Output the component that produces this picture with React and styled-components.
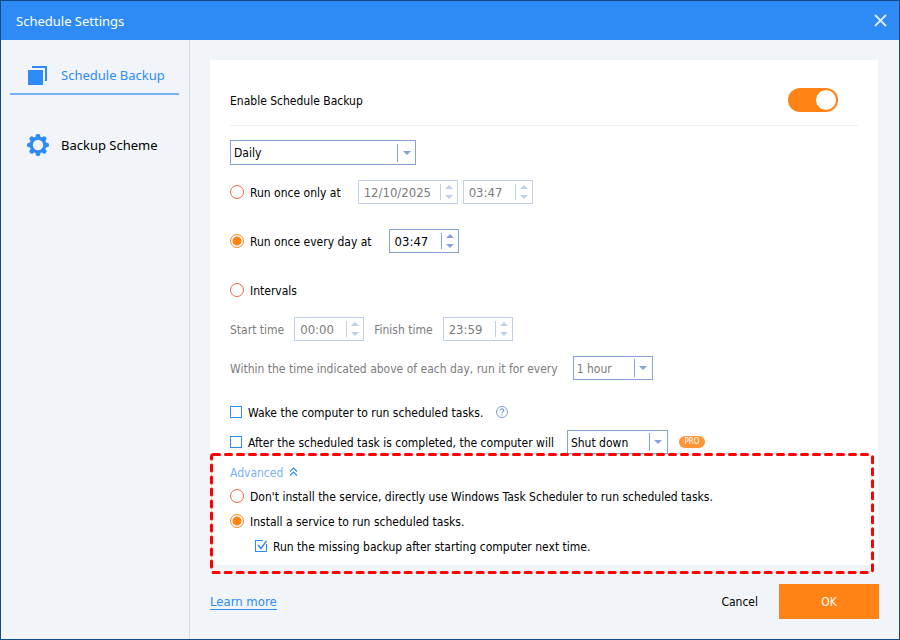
import React, { useState } from 'react';
import styled, { createGlobalStyle } from 'styled-components';

const GlobalStyle = createGlobalStyle`
  *, *::before, *::after {
    box-sizing: border-box;
  }

  body {
    margin: 0;
  }

  body, button, input, select {
    font-family: 'DejaVu Sans Condensed', 'Noto Sans', sans-serif;
    font-size: 12px;
    color: #000;
  }
`;

const Window = styled.div`
  min-height: 100vh;
  display: flex;
  flex-direction: column;
  background: #f1f5fa;
  border: 1px solid #0f4a86;
`;

const TitleBar = styled.header`
  height: 39px;
  flex: none;
  display: flex;
  align-items: center;
  justify-content: space-between;
  padding: 0 12px 0 15px;
  background: #2e8bf6;
`;

const Title = styled.h1`
  margin: 0;
  font-family: 'Noto Sans', sans-serif;
  font-size: 13px;
  font-weight: 400;
  color: #fff;
`;

const CloseButton = styled.button`
  display: flex;
  padding: 0;
  border: 0;
  background: none;
  cursor: pointer;
`;

const Body = styled.div`
  flex: 1;
  display: flex;
`;

const Sidebar = styled.nav`
  width: 189px;
  flex: none;
  display: flex;
  flex-direction: column;
  gap: 30px;
  padding: 15px 10px 0 9px;
  border-right: 1px solid #d8dce2;
`;

const NavItem = styled.a`
  height: 40px;
  display: flex;
  align-items: center;
  gap: 11px;
  padding: 2px 0 0 16px;
  font-family: 'Noto Sans', sans-serif;
  font-size: 13px;
  white-space: nowrap;
  text-decoration: none;
  color: ${({ $active }) => ($active ? '#2e8bf6' : '#000')};
  border-bottom: 2px solid ${({ $active }) => ($active ? '#79b1f8' : 'transparent')};
`;

const Main = styled.main`
  flex: 1;
  display: flex;
  flex-direction: column;
  padding: 20px;
`;

const Card = styled.section`
  margin-right: 1px;
  padding: 0 20px 7px;
  background: #fff;
`;

const EnableRow = styled.div`
  display: flex;
  align-items: center;
  justify-content: space-between;
  padding: 28px 20px 13px 0;
  margin-bottom: 14px;
  border-bottom: 1px solid #f0f1f3;
`;

const Toggle = styled.input`
  appearance: none;
  width: 50px;
  height: 24px;
  margin: 0;
  padding: 2px;
  display: flex;
  justify-content: ${({ checked }) => (checked ? 'flex-end' : 'flex-start')};
  border-radius: 12px;
  background: ${({ checked }) => (checked ? '#ff8316' : '#c4c9d1')};
  cursor: pointer;

  &::before {
    content: '';
    width: 20px;
    height: 20px;
    border-radius: 50%;
    background: #fff;
  }
`;

const Row = styled.div`
  min-height: 24px;
  display: flex;
  align-items: center;
  margin-top: ${({ $top = 0 }) => $top}px;
`;

const Option = styled.label`
  display: flex;
  align-items: center;
  gap: 6px;
  white-space: nowrap;
`;

const Text = styled.span`
  padding-top: 2px;
`;

const Radio = styled.input.attrs({ type: 'radio' })`
  appearance: none;
  width: 14px;
  height: 14px;
  margin: 0;
  border: 1px solid #f0673c;
  border-radius: 50%;
  background: #fff;

  &:checked {
    border-color: #ff8316;
    background: radial-gradient(circle, #ff8316 4px, #fff 5px);
  }
`;

const CheckInput = styled.input.attrs({ type: 'checkbox' })`
  appearance: none;
  width: 12px;
  height: 12px;
  margin: 0;
  grid-area: 1 / 1;
  border: 1px solid #2e8bf6;
  background: #fff;
`;

const CheckBox = styled.span`
  display: grid;

  svg {
    grid-area: 1 / 1;
    z-index: 1;
    pointer-events: none;
  }
`;

const FieldLabel = styled.label`
  margin-right: ${({ $right = 10 }) => $right}px;
  padding-top: 2px;
  white-space: nowrap;
  color: #7c7c7c;
`;

const Field = styled.div`
  width: ${({ $width }) => $width}px;
  height: 24px;
  flex: none;
  display: flex;
  align-items: center;
  margin-left: ${({ $left = 0 }) => $left}px;
  margin-right: ${({ $right = 0 }) => $right}px;
  border: 1px solid ${({ $disabled }) => ($disabled ? '#c0d0e9' : '#86a3d3')};
  color: ${({ $disabled }) => ($disabled ? '#c0d0e9' : '#86a3d3')};
  background: #fff;
`;

const FieldInput = styled.input`
  flex: 1;
  min-width: 0;
  height: 22px;
  padding: 1px 0 0 5px;
  border: 0;
  outline: 0;
  background: none;
  font-size: 13px;

  &:disabled {
    color: #7c7c7c;
  }
`;

const Spinner = styled.div`
  width: 17px;
  height: 16px;
  display: flex;
  flex-direction: column;
  align-items: center;
  justify-content: space-between;
  padding: 1px 0;
  border-left: 1px solid currentColor;
`;

const Step = styled.button`
  display: flex;
  padding: 0;
  border: 0;
  background: none;
  color: inherit;
`;

const SelectBox = styled.div`
  width: ${({ $width }) => $width}px;
  height: ${({ $height = 24 }) => $height}px;
  flex: none;
  display: grid;
  align-items: center;
  margin-left: ${({ $left = 0 }) => $left}px;
  border: 1px solid #86a3d3;
  color: #86a3d3;
  background: #fff;
`;

const NativeSelect = styled.select`
  appearance: none;
  grid-area: 1 / 1;
  width: 100%;
  height: 22px;
  padding: 1px 18px 0 3px;
  border: 0;
  outline: 0;
  background: none;
  color: ${({ $muted }) => ($muted ? '#7c7c7c' : '#000')};
`;

const SelectArrow = styled.span`
  grid-area: 1 / 1;
  justify-self: end;
  width: 18px;
  height: 18px;
  display: flex;
  align-items: center;
  justify-content: center;
  border-left: 1px solid currentColor;
  pointer-events: none;
`;

const HelpButton = styled.button`
  display: flex;
  margin-left: 13px;
  padding: 0;
  border: 0;
  background: none;
`;

const ProBadge = styled.span`
  width: 26px;
  height: 12px;
  margin-left: 11px;
  border-radius: 6px;
  background: #ff9536;
  color: #fff;
  font-size: 8px;
  line-height: 12px;
  text-align: center;
`;

const Advanced = styled.div`
  position: relative;
  display: flex;
  flex-direction: column;
  align-items: flex-start;
  gap: 1px;
  padding-top: 6px;
`;

const AdvancedToggle = styled.button`
  height: 23px;
  display: flex;
  align-items: center;
  gap: 6px;
  padding: 0;
  border: 0;
  background: none;
  color: #79b1f8;
`;

const AdvancedRow = styled.div`
  height: 24px;
  display: flex;
  align-items: center;
  padding-left: ${({ $indent }) => ($indent ? 25 : 0)}px;
`;

const Highlight = styled.svg`
  position: absolute;
  top: -1px;
  left: -20px;
  width: calc(100% + 36px);
  height: 121px;
  pointer-events: none;
`;

const Footer = styled.footer`
  display: flex;
  align-items: center;
  margin-top: 19px;
`;

const LearnMore = styled.a`
  margin-right: auto;
  border-bottom: 1px solid #2e8bf6;
  font-size: 13px;
  line-height: 15px;
  text-decoration: none;
  color: #2e8bf6;
`;

const CancelButton = styled.button`
  height: 35px;
  padding: 0 21px;
  border: 0;
  background: none;
`;

const OkButton = styled.button`
  width: 100px;
  height: 35px;
  border: 0;
  background: #ff8316;
  color: #fff;
`;

const CloseIcon = () => (
  <svg width="13" height="13" viewBox="0 0 13 13" stroke="#dcebfd" strokeWidth="1.8">
    <path d="M1 1l11 11M12 1l-11 11" />
  </svg>
);

const StackIcon = () => (
  <svg width="24" height="24" viewBox="0 0 24 24" fill="#2e8bf6">
    <path d="M2 7h15v15H2z" />
    <path d="M6 3h15v15h-2V5H6z" />
  </svg>
);

const GearIcon = () => (
  <svg width="24" height="24" viewBox="0 0 24 24">
    <g fill="#2e8bf6">
      {[0, 45, 90, 135].map((angle) => (
        <rect key={angle} x="9.7" y="1" width="4.6" height="22" rx="1.8" transform={`rotate(${angle} 12 12)`} />
      ))}
      <circle cx="12" cy="12" r="8.4" />
    </g>
    <circle cx="12" cy="12" r="5.2" fill="#f1f5fa" />
  </svg>
);

const UpTriangle = () => (
  <svg width="8" height="4" viewBox="0 0 8 4" fill="currentColor">
    <path d="M0 4L4 0 8 4z" />
  </svg>
);

const DownTriangle = () => (
  <svg width="8" height="4" viewBox="0 0 8 4" fill="currentColor">
    <path d="M0 0h8L4 4z" />
  </svg>
);

const HelpIcon = () => (
  <svg width="12" height="12" viewBox="0 0 12 12" fill="none" stroke="#7fa0c8">
    <circle cx="6" cy="6" r="5.5" />
    <path d="M4.2 4.6c0-2.3 3.6-2.2 3.6 0C7.8 5.8 6 5.8 6 7.3" strokeWidth="1.2" />
    <path d="M6 8.3v1.2" strokeWidth="1.2" />
  </svg>
);

const DoubleChevron = () => (
  <svg width="9" height="9" viewBox="0 0 9 9" fill="none" stroke="#2e8bf6" strokeWidth="1.2">
    <path d="M1 4.5L4.5 1 8 4.5M1 8.5L4.5 5 8 8.5" />
  </svg>
);

const Check = ({ label, ...props }) => (
  <Option>
    <CheckBox>
      <CheckInput {...props} />
      {props.checked && (
        <svg width="12" height="12" viewBox="0 0 12 12" fill="none">
          <path d="M11.5 0v4M8 .5h4" stroke="#fff" />
          <path d="M3 5l3 3.5L11.5 1" stroke="#2e8bf6" strokeWidth="1.5" />
        </svg>
      )}
    </CheckBox>
    <Text>{label}</Text>
  </Option>
);

const RadioOption = ({ label, ...props }) => (
  <Option>
    <Radio {...props} />
    <Text>{label}</Text>
  </Option>
);

const SpinField = ({ id, label, value, disabled, ...box }) => (
  <Field $disabled={disabled} {...box}>
    <FieldInput id={id} aria-label={label} defaultValue={value} disabled={disabled} />
    <Spinner>
      <Step aria-label="Increase" disabled={disabled}><UpTriangle /></Step>
      <Step aria-label="Decrease" disabled={disabled}><DownTriangle /></Step>
    </Spinner>
  </Field>
);

const Select = ({ id, label, options, $muted, ...box }) => (
  <SelectBox {...box}>
    <NativeSelect id={id} aria-label={label} $muted={$muted}>
      {options.map((option) => (
        <option key={option}>{option}</option>
      ))}
    </NativeSelect>
    <SelectArrow><DownTriangle /></SelectArrow>
  </SelectBox>
);

const App = () => {
  const [enabled, setEnabled] = useState(true);
  const [mode, setMode] = useState('daily');
  const [wake, setWake] = useState(false);
  const [after, setAfter] = useState(false);
  const [service, setService] = useState('service');
  const [missing, setMissing] = useState(true);

  return (
    <Window>
      <GlobalStyle />
      <TitleBar>
        <Title>Schedule Settings</Title>
        <CloseButton aria-label="Close"><CloseIcon /></CloseButton>
      </TitleBar>

      <Body>
        <Sidebar>
          <NavItem href="#schedule" $active><StackIcon />Schedule Backup</NavItem>
          <NavItem href="#scheme"><GearIcon />Backup Scheme</NavItem>
        </Sidebar>

        <Main>
          <Card>
            <EnableRow>
              <Option htmlFor="enable"><Text>Enable Schedule Backup</Text></Option>
              <Toggle
                id="enable"
                type="checkbox"
                checked={enabled}
                onChange={() => setEnabled(!enabled)}
              />
            </EnableRow>

            <Row>
              <Select label="Frequency" options={['Daily', 'Weekly', 'Monthly']} $width={186} $height={25} />
            </Row>

            <Row $top={15}>
              <RadioOption
                name="mode"
                label="Run once only at"
                checked={mode === 'once'}
                onChange={() => setMode('once')}
              />
              <SpinField label="Date" value="12/10/2025" disabled $width={100} $left={17} $right={5} />
              <SpinField label="Time" value="03:47" disabled $width={70} />
            </Row>

            <Row $top={25}>
              <RadioOption
                name="mode"
                label="Run once every day at"
                checked={mode === 'daily'}
                onChange={() => setMode('daily')}
              />
              <SpinField label="Daily time" value="03:47" $width={70} $left={17} />
            </Row>

            <Row $top={25}>
              <RadioOption
                name="mode"
                label="Intervals"
                checked={mode === 'intervals'}
                onChange={() => setMode('intervals')}
              />
            </Row>

            <Row $top={15}>
              <FieldLabel htmlFor="start">Start time</FieldLabel>
              <SpinField id="start" value="00:00" disabled $width={70} $right={10} />
              <FieldLabel htmlFor="finish">Finish time</FieldLabel>
              <SpinField id="finish" value="23:59" disabled $width={70} />
            </Row>

            <Row $top={15}>
              <FieldLabel htmlFor="every" $right={15}>
                Within the time indicated above of each day, run it for every
              </FieldLabel>
              <Select id="every" options={['1 hour', '2 hours', '3 hours']} $width={80} $muted />
            </Row>

            <Row $top={20}>
              <Check
                label="Wake the computer to run scheduled tasks."
                checked={wake}
                onChange={() => setWake(!wake)}
              />
              <HelpButton aria-label="Help"><HelpIcon /></HelpButton>
            </Row>

            <Row $top={6}>
              <Check
                label="After the scheduled task is completed, the computer will"
                checked={after}
                onChange={() => setAfter(!after)}
              />
              <Select label="Action" options={['Shut down', 'Sleep', 'Hibernate']} $width={101} $left={13} />
              <ProBadge>PRO</ProBadge>
            </Row>

            <Advanced>
              <AdvancedToggle><Text>Advanced</Text><DoubleChevron /></AdvancedToggle>
              <AdvancedRow>
                <RadioOption
                  name="service"
                  label="Don't install the service, directly use Windows Task Scheduler to run scheduled tasks."
                  checked={service === 'task'}
                  onChange={() => setService('task')}
                />
              </AdvancedRow>
              <AdvancedRow>
                <RadioOption
                  name="service"
                  label="Install a service to run scheduled tasks."
                  checked={service === 'service'}
                  onChange={() => setService('service')}
                />
              </AdvancedRow>
              <AdvancedRow $indent>
                <Check
                  label="Run the missing backup after starting computer next time."
                  checked={missing}
                  onChange={() => setMissing(!missing)}
                />
              </AdvancedRow>
              <Highlight fill="none" stroke="#ff0000" strokeWidth="3" strokeDasharray="6 6" strokeLinecap="round">
                <rect x="1.5" y="1.5" width="calc(100% - 3px)" height="118" rx="2" />
              </Highlight>
            </Advanced>
          </Card>

          <Footer>
            <LearnMore href="#learn">Learn more</LearnMore>
            <CancelButton>Cancel</CancelButton>
            <OkButton>OK</OkButton>
          </Footer>
        </Main>
      </Body>
    </Window>
  );
};

export default App;
